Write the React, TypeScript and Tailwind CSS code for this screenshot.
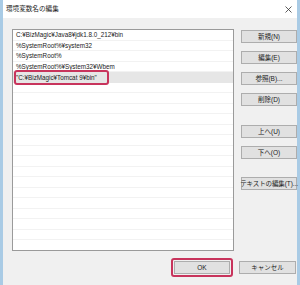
import React from "react";

const font = "font-['Liberation_Sans','Noto_Sans_CJK_JP',sans-serif]";

const rows = [
  "C:¥BizMagic¥Java8¥jdk1.8.0_212¥bin",
  "%SystemRoot%¥system32",
  "%SystemRoot%",
  "%SystemRoot%¥System32¥Wbem",
];

const Btn = ({ label, className = "" }: { label: string; className?: string }) => (
  <div
    className={`h-[13px] w-[56px] flex items-center justify-center bg-[#e1e1e1] border border-[#adadad] text-[6.5px] text-[#222] whitespace-nowrap overflow-visible ${className}`}
  >
    {label}
  </div>
);

const App = () => {
  return (
    <div className={`w-[300px] h-[285px] bg-[#f0f0f0] border-x-[3px] border-[#a9cbe5] flex flex-col ${font}`}>
      <div className="h-[18px] bg-white flex items-center justify-between pl-[3px] pr-[4px]">
        <span className="text-[6.6px] text-[#222]">環境変数名の編集</span>
        <svg width="7" height="7" viewBox="0 0 7 7" className="mr-[1px]">
          <path d="M0.5 0.5 L6.5 6.5 M6.5 0.5 L0.5 6.5" stroke="#333" strokeWidth="0.8" />
        </svg>
      </div>

      <div className="flex pl-[9px] pt-[11px]">
        <div className="w-[222px] h-[222px] bg-white border border-[#9a9a9a] overflow-hidden">
          {rows.map((r) => (
            <div key={r} className="h-[10.5px] border-b border-[#f2f2f2] flex items-center pl-[3px] text-[6.3px] text-[#222]">
              {r}
            </div>
          ))}
          <div className="h-[10.5px] bg-[#e6e6e6] flex items-center pl-[3px] text-[6.3px] text-[#222] relative">
            <span className="absolute left-[1px] top-[-2px] w-[95px] h-[15px] border-2 border-[#c8345c] rounded-[3px]" />
            "C:¥BizMagic¥Tomcat 9¥bin"
          </div>
          {Array.from({ length: 16 }).map((_, i) => (
            <div key={i} className="h-[10.5px] border-b border-[#f2f2f2]" />
          ))}
        </div>

        <div className="ml-[7px] flex flex-col pt-[1px]">
          <Btn label="新規(N)" />
          <Btn label="編集(E)" className="mt-[8px]" />
          <Btn label="参照(B)..." className="mt-[8px] border-[#2a7fd4]" />
          <Btn label="削除(D)" className="mt-[8px]" />
          <Btn label="上へ(U)" className="mt-[19px]" />
          <Btn label="下へ(O)" className="mt-[8px]" />
          <Btn label="テキストの編集(T)..." className="mt-[18px] text-[5.9px] tracking-[-0.1px]" />
        </div>
      </div>

      <div className="flex justify-end items-center mt-[7px] pr-[1px]">
        <div className="border-2 border-[#c8345c] rounded-[3px] p-[1px]">
          <Btn label="OK" className="w-[50px]" />
        </div>
        <Btn label="キャンセル" className="ml-[6px] w-[57px]" />
      </div>
    </div>
  );
};

export default App;
